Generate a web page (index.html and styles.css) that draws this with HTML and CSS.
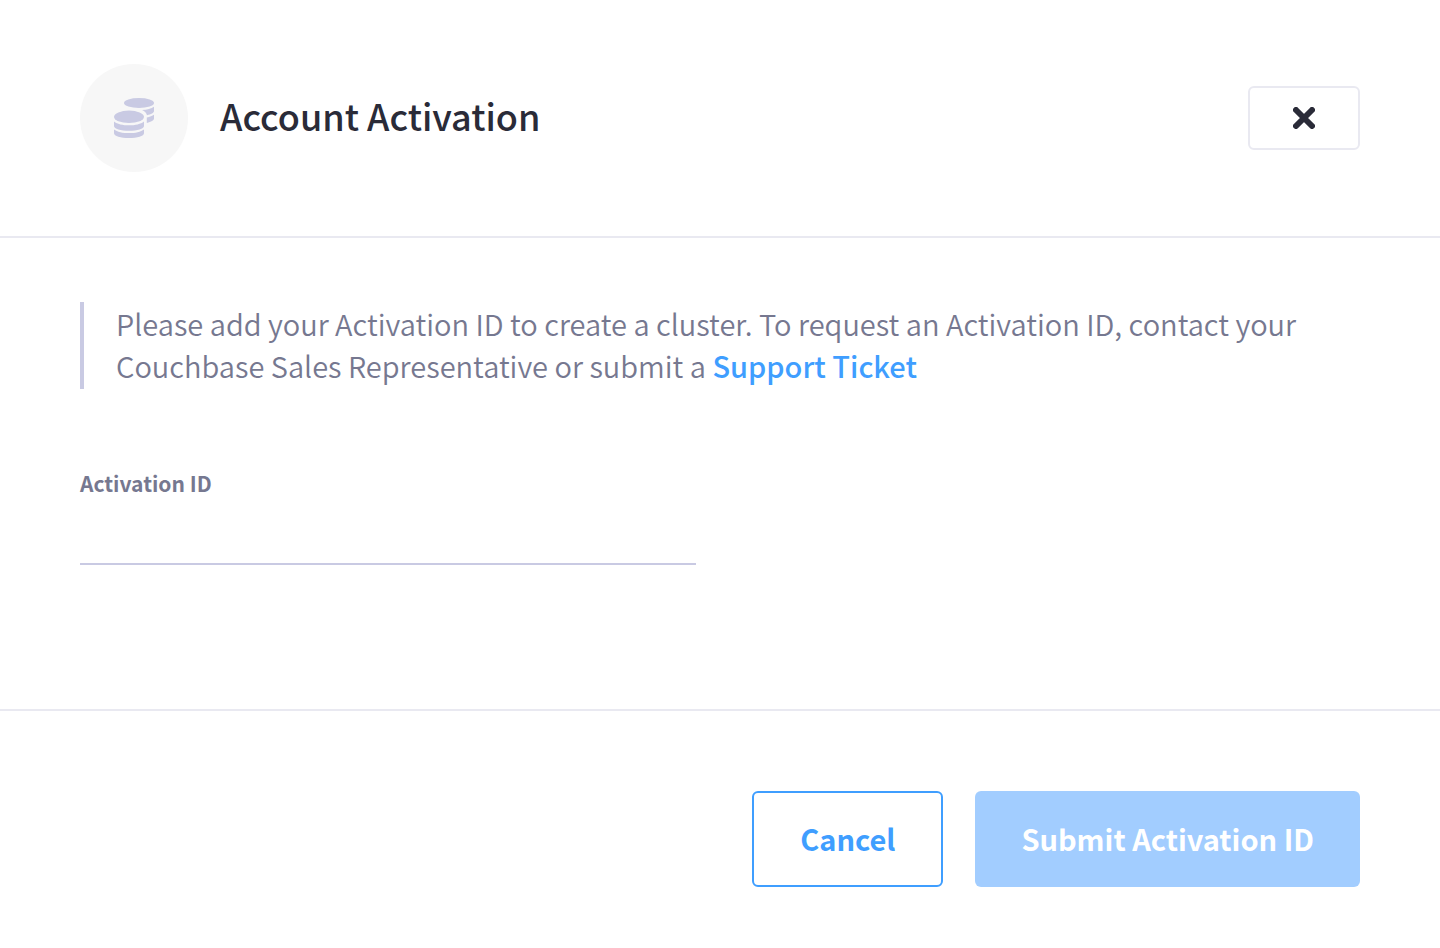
FILE: index.html
```html
<!DOCTYPE html>
<html lang="en">
<head>
<meta charset="utf-8">
<meta name="viewport" content="width=device-width, initial-scale=1">
<title>Account Activation</title>
<link rel="stylesheet" href="styles.css">
</head>
<body>
<form class="dialog">
  <header class="dialog-header">
    <span class="badge">
      <svg class="badge-icon" viewBox="0 0 40 40" aria-hidden="true">
        <ellipse cx="25" cy="5" rx="15" ry="5"/>
        <path d="M28 12c5-.3 9.500-1.400 12-3.300v4.300c0 1.900-2.900 3.400-7 4.200-.5-2.200-2.200-4-5-5.200z"/>
        <path d="M32.800 19.500c3-.6 5.600-1.500 7.200-2.700v3.700c0 1.900-2.900 3.500-7.200 4.400z"/>
        <ellipse cx="15" cy="18.800" rx="15" ry="6.200"/>
        <path d="M0 23.400c3.200 2.500 8.800 3.900 15 3.900s11.800-1.400 15-3.900V28c0 2.700-6.700 4.800-15 4.800S0 30.700 0 28z"/>
        <path d="M0 31.400c3.200 2.400 8.800 3.700 15 3.700s11.800-1.300 15-3.700v3.800c0 2.700-6.700 4.800-15 4.800S0 37.900 0 35.200z"/>
      </svg>
    </span>
    <h1 class="title">Account Activation</h1>
    <button class="close" type="button" aria-label="Close">
      <svg class="close-icon" viewBox="0 0 22 22" aria-hidden="true"><path d="M3 3l16 16M19 3L3 19"/></svg>
    </button>
  </header>
  <main class="dialog-body">
    <p class="note">Please add your Activation ID to create a cluster. To request an Activation ID, contact your Couchbase Sales Representative or submit a <a class="link" href="#support">Support Ticket</a></p>
    <label class="label" for="activation-id">Activation ID</label>
    <input class="input" id="activation-id" type="text">
  </main>
  <footer class="dialog-footer">
    <button class="button button-outline" type="button">Cancel</button>
    <button class="button button-primary" type="submit">Submit Activation ID</button>
  </footer>
</form>
</body>
</html>
```
FILE: styles.css
```css
* { box-sizing: border-box; }
body {
  margin: 0;
  background: #fff;
  color: #2a2b38;
  font-family: "Noto Sans CJK SC", "Noto Sans", sans-serif;
}
.dialog-header {
  display: flex;
  align-items: center;
  gap: 32px;
  padding: 64px 80px;
  border-bottom: 2px solid #e9e9f1;
}
.badge {
  display: flex;
  align-items: center;
  justify-content: center;
  width: 108px;
  height: 108px;
  border-radius: 50%;
  background: #f7f7f7;
}
.badge-icon { width: 40px; height: 40px; fill: #c9cae3; }
.title { flex: 1; margin: 0; padding-bottom: 6px; font-size: 36px; font-weight: 500; line-height: 48px; }
.close {
  display: flex;
  align-items: center;
  justify-content: center;
  width: 112px;
  height: 64px;
  padding: 0;
  border: 2px solid #e9e9f1;
  border-radius: 6px;
  background: #fff;
}
.close-icon { width: 22px; height: 22px; fill: none; stroke: #2a2b38; stroke-width: 6; stroke-linecap: round; }
.dialog-body { padding: 64px 80px 144px; border-bottom: 2px solid #e9e9f1; }
.note {
  margin: 0 0 80px;
  padding: 0 0 3px 32px;
  border-left: 4px solid #c9cae3;
  color: #767890;
  font-size: 29px;
  font-weight: 350;
  line-height: 42px;
}
.link { color: #3f9eff; font-weight: 500; text-decoration: none; }
.label { display: block; padding-bottom: 4px; color: #767890; font-size: 21px; font-weight: 700; line-height: 28px; }
.input {
  display: block;
  width: 616px;
  max-width: 100%;
  height: 64px;
  padding: 0;
  border: 0;
  border-bottom: 2px solid #c9cae3;
  outline: 0;
  background: none;
  color: #2a2b38;
  font: inherit;
  font-size: 29px;
}
.dialog-footer { display: flex; justify-content: flex-end; gap: 32px; padding: 80px; }
.button {
  height: 96px;
  padding: 0 46px 2px;
  border: 0;
  border-radius: 6px;
  font-family: inherit;
  font-size: 29px;
  font-weight: 700;
}
.button-outline { border: 2px solid #3f9eff; background: #fff; color: #3f9eff; }
.button-primary { background: #a2cdff; color: #fff; }
```
